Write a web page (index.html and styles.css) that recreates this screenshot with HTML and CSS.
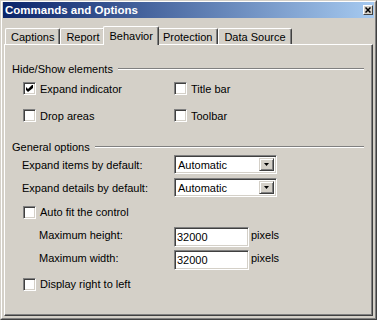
FILE: index.html
```html
<!DOCTYPE html>
<html>
<head>
<meta charset="utf-8">
<title>Commands and Options</title>
<link rel="stylesheet" href="styles.css">
</head>
<body>
<div class="window">
  <div class="frame">
    <div class="titlebar">
      <span class="title">Commands and Options</span>
      <span class="close"><svg width="6" height="6" viewBox="0 0 6 6"><path d="M0.5 0.5 L5.5 5.5 M5.5 0.5 L0.5 5.5" stroke="#000" stroke-width="1.5"/></svg></span>
    </div>
    <div class="tabs">
      <div class="tab">Captions</div>
      <div class="tab">Report</div>
      <div class="tab active">Behavior</div>
      <div class="tab">Protection</div>
      <div class="tab">Data Source</div>
    </div>
    <div class="panel">
      <div class="group-head"><span>Hide/Show elements</span><span class="rule"></span></div>
      <div class="check-grid">
        <div class="check"><span class="box"><svg width="7" height="7" viewBox="0 0 7 7"><path d="M0 2 L2 4 L6 0 L7 0 L7 3 L2 7 L0 5 Z" fill="#000"/></svg></span>Expand indicator</div>
        <div class="check"><span class="box"></span>Title bar</div>
        <div class="check"><span class="box"></span>Drop areas</div>
        <div class="check"><span class="box"></span>Toolbar</div>
      </div>
      <div class="group-head second"><span>General options</span><span class="rule"></span></div>
      <div class="field-row">
        <span class="label">Expand items by default:</span>
        <span class="select"><span class="value">Automatic</span><span class="drop"><svg width="5" height="3" viewBox="0 0 5 3"><path d="M0 0 H5 L2.5 3 Z" fill="#000"/></svg></span></span>
      </div>
      <div class="field-row">
        <span class="label">Expand details by default:</span>
        <span class="select"><span class="value">Automatic</span><span class="drop"><svg width="5" height="3" viewBox="0 0 5 3"><path d="M0 0 H5 L2.5 3 Z" fill="#000"/></svg></span></span>
      </div>
      <div class="check single"><span class="box"></span>Auto fit the control</div>
      <div class="size-row">
        <span class="label">Maximum height:</span>
        <span class="input">32000</span>
        <span class="unit">pixels</span>
      </div>
      <div class="size-row">
        <span class="label">Maximum width:</span>
        <span class="input">32000</span>
        <span class="unit">pixels</span>
      </div>
      <div class="check single"><span class="box"></span>Display right to left</div>
    </div>
  </div>
</div>
</body>
</html>
```
FILE: styles.css
```css
* { box-sizing: border-box; }
html, body { margin: 0; padding: 0; }
body {
  width: 377px;
  height: 320px;
  overflow: hidden;
  background: #d4d0c8;
  font-family: "Liberation Sans", Arial, sans-serif;
  font-size: 11px;
  color: #000;
}
.window {
  height: 320px;
  border: 1px solid;
  border-color: #d4d0c8 #404040 #404040 #d4d0c8;
}
.frame {
  height: 100%;
  border: 1px solid;
  border-color: #fff #808080 #808080 #fff;
  padding: 0 1px 1px 1px;
  display: flex;
  flex-direction: column;
}
.titlebar {
  flex: none;
  height: 16px;
  background: linear-gradient(to right, #0a246a, #a6caf0);
  display: flex;
  align-items: center;
  justify-content: space-between;
  padding: 0 1px 0 2px;
}
.title {
  color: #fff;
  font-weight: bold;
  font-size: 11.5px;
  white-space: nowrap;
}
.close {
  width: 10px;
  height: 10px;
  background: #d4d0c8;
  border: 1px solid;
  border-color: #fff #404040 #404040 #fff;
  display: flex;
  align-items: center;
  justify-content: center;
}
.tabs {
  flex: none;
  height: 26px;
  display: flex;
  align-items: flex-end;
  padding-left: 2px;
}
.tab {
  height: 16px;
  padding: 0 5px;
  display: flex;
  align-items: center;
  white-space: nowrap;
  border-top: 1px solid #fff;
  border-left: 1px solid #fff;
  border-right: 1px solid #404040;
  box-shadow: inset -1px 0 #808080;
  border-radius: 2px 2px 0 0;
}
.tab.active {
  height: 19px;
  margin: 0 -2px -1px -2px;
  padding: 0 5px 1px 5px;
  background: #d4d0c8;
  position: relative;
  z-index: 1;
}
.panel {
  flex: 1;
  margin: 0 1px 1px 1px;
  border: 1px solid;
  border-color: #fff #404040 #404040 #fff;
  box-shadow: inset -1px -1px #808080;
  padding: 17px 8px 0 7px;
}
.group-head {
  height: 13px;
  display: flex;
  align-items: center;
  gap: 5px;
  white-space: nowrap;
}
.group-head.second { margin-top: 11px; }
.rule {
  flex: 1;
  height: 2px;
  border-top: 1px solid #808080;
  border-bottom: 1px solid #fff;
}
.check-grid {
  margin-left: 11px;
  display: grid;
  grid-template-columns: 151px auto;
  grid-auto-rows: 27px;
}
.check {
  display: flex;
  align-items: center;
  gap: 4px;
  white-space: nowrap;
}
.check.single {
  margin-left: 11px;
  height: 26px;
}
.box {
  width: 13px;
  height: 13px;
  flex: none;
  background: #fff;
  border: 1px solid;
  border-color: #808080 #fff #fff #808080;
  box-shadow: inset 1px 1px #404040, inset -1px -1px #d4d0c8;
  display: flex;
  align-items: center;
  justify-content: center;
}
.field-row {
  height: 23px;
  margin-left: 10px;
  display: grid;
  grid-template-columns: 152px auto;
  align-items: center;
}
.select {
  width: 103px;
  height: 19px;
  background: #fff;
  border: 1px solid;
  border-color: #808080 #fff #fff #808080;
  box-shadow: inset 1px 1px #404040, inset -1px -1px #d4d0c8;
  display: flex;
  align-items: stretch;
  padding: 2px;
}
.value {
  flex: 1;
  display: flex;
  align-items: center;
  padding-left: 1px;
}
.drop {
  width: 15px;
  background: #d4d0c8;
  border: 1px solid;
  border-color: #d4d0c8 #404040 #404040 #d4d0c8;
  box-shadow: inset 1px 1px #fff, inset -1px -1px #808080;
  display: flex;
  align-items: center;
  justify-content: center;
}
.size-row {
  height: 23px;
  margin-left: 27px;
  display: grid;
  grid-template-columns: 135px 77px auto;
  align-items: center;
}
.size-row .label,
.unit {
  margin-bottom: 4px;
}
.input {
  width: 75px;
  height: 20px;
  background: #fff;
  border: 1px solid;
  border-color: #808080 #fff #fff #808080;
  box-shadow: inset 1px 1px #404040, inset -1px -1px #d4d0c8;
  display: flex;
  align-items: center;
  padding-left: 2px;
}
```
